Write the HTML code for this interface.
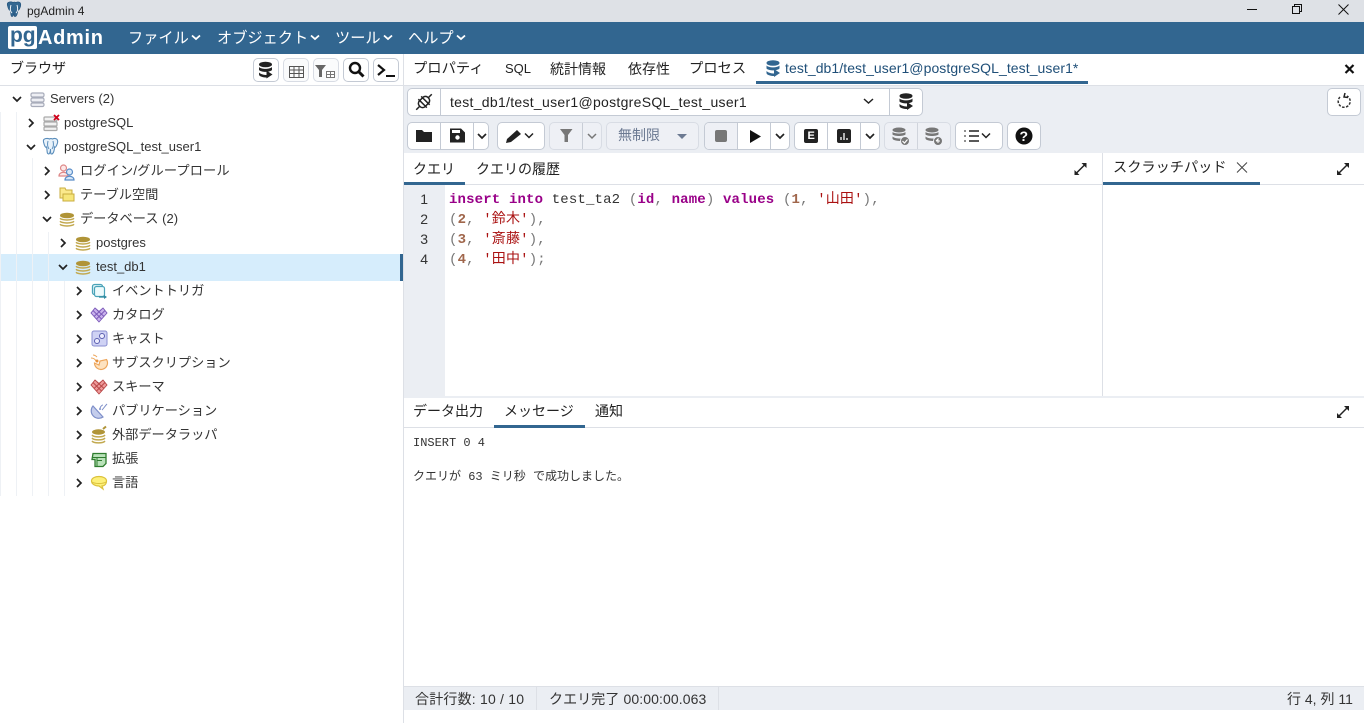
<!DOCTYPE html>
<html lang="ja"><head><meta charset="utf-8"><title>pgAdmin 4</title>
<style>
html,body{margin:0;padding:0;width:1364px;height:723px;overflow:hidden;background:#fff}
body{position:relative;font-family:"Liberation Sans","Noto Sans CJK JP",sans-serif;color:#222;font-size:13px}
.b{position:absolute}
.t{position:absolute;white-space:nowrap;line-height:20px;transform:translateY(-9px)}
.tr{font-size:13px;color:#333}
.cj{font-size:13.2px}
.tab{font-size:14px;color:#222}
.m{font-size:15.2px;color:#fff}
.btn{position:absolute;box-sizing:border-box;background:#fff;border:1px solid #c4cad4;border-radius:5px}
.dis{background:#eef0f5;border-color:#d8dce4}
.c{position:absolute;white-space:pre;font:14px/20px "Liberation Mono","Noto Sans CJK JP",monospace;letter-spacing:.16px;color:#333;left:449px}
.k{color:#908;font-weight:bold}.n{color:#a0664b;font-weight:bold}.s{color:#a11}.p{color:#777}
.ln{position:absolute;left:404px;width:24px;text-align:right;font:14px/20px "Liberation Sans",sans-serif;color:#333}
svg{position:absolute;left:0;top:0;overflow:visible;color:#222}
.o{position:absolute;white-space:pre;font:12px/16px "Liberation Mono","Noto Sans CJK JP",monospace;color:#333;left:413px}
.st{font-size:14px;color:#333}
</style></head><body>

<div class="b" style="left:0;top:0;width:1364px;height:22px;background:#dee1e6"></div>
<div class="b" style="left:0;top:22px;width:1364px;height:32px;background:#326690"></div>
<div class="b" style="left:403px;top:54px;width:1px;height:669px;background:#dde0e6"></div>
<div class="b" style="left:0;top:85px;width:1364px;height:1px;background:#dde0e6"></div>
<div class="b" style="left:404px;top:86px;width:960px;height:67px;background:#ebeef3"></div>
<div class="b" style="left:404px;top:184px;width:960px;height:1px;background:#dde0e6"></div>
<div class="b" style="left:404px;top:185px;width:41px;height:211px;background:#ebeef3"></div>
<div class="b" style="left:1102px;top:153px;width:1px;height:243px;background:#dde0e6"></div>
<div class="b" style="left:404px;top:396px;width:960px;height:2px;background:#ebeef3"></div>
<div class="b" style="left:404px;top:427px;width:960px;height:1px;background:#dde0e6"></div>
<div class="b" style="left:404px;top:686px;width:960px;height:24px;background:#ebeef3;border-top:1px solid #dde0e6;box-sizing:border-box"></div>
<div class="b" style="left:536px;top:687px;width:1px;height:23px;background:#dde0e6"></div>
<div class="b" style="left:718px;top:687px;width:1px;height:23px;background:#dde0e6"></div>

<div class="b" style="left:0;top:254px;width:400px;height:27px;background:#d6edfc"></div>
<div class="b" style="left:400px;top:254px;width:3px;height:27px;background:#326690"></div>
<div class="b" style="left:0;top:112px;width:1px;height:384px;background:#eef1f5"></div>
<div class="b" style="left:16px;top:112px;width:1px;height:384px;background:#eef1f5"></div>
<div class="b" style="left:32px;top:158px;width:1px;height:338px;background:#eef1f5"></div>
<div class="b" style="left:48px;top:232px;width:1px;height:264px;background:#eef1f5"></div>
<div class="b" style="left:64px;top:281px;width:1px;height:215px;background:#eef1f5"></div>

<div class="b" style="left:756px;top:81px;width:332px;height:3px;background:#326690"></div>
<div class="b" style="left:404px;top:182px;width:61px;height:3px;background:#326690"></div>
<div class="b" style="left:1103px;top:182px;width:157px;height:3px;background:#326690"></div>
<div class="b" style="left:494px;top:425px;width:91px;height:3px;background:#326690"></div>

<!-- toolbar buttons -->
<div class="btn" style="left:253px;top:58px;width:26px;height:24px"></div>
<div class="btn dis" style="left:283px;top:58px;width:26px;height:24px;background:#fafbfc"></div>
<div class="btn dis" style="left:313px;top:58px;width:26px;height:24px;background:#fafbfc"></div>
<div class="btn" style="left:343px;top:58px;width:26px;height:24px"></div>
<div class="btn" style="left:373px;top:58px;width:26px;height:24px"></div>

<div class="btn" style="left:407px;top:88px;width:516px;height:28px"></div>
<div class="b" style="left:440px;top:89px;width:1px;height:26px;background:#c4cad4"></div>
<div class="b" style="left:889px;top:89px;width:1px;height:26px;background:#c4cad4"></div>
<div class="btn" style="left:1327px;top:88px;width:34px;height:28px"></div>

<div class="btn" style="left:407px;top:122px;width:82px;height:28px"></div>
<div class="b" style="left:440px;top:123px;width:1px;height:26px;background:#c4cad4"></div>
<div class="b" style="left:473px;top:123px;width:1px;height:26px;background:#c4cad4"></div>
<div class="btn" style="left:497px;top:122px;width:48px;height:28px"></div>
<div class="btn dis" style="left:549px;top:122px;width:53px;height:28px"></div>
<div class="b" style="left:582px;top:123px;width:1px;height:26px;background:#c8cdd6"></div>
<div class="btn dis" style="left:606px;top:122px;width:93px;height:28px"></div>
<div class="btn" style="left:704px;top:122px;width:86px;height:28px"></div>
<div class="b" style="left:705px;top:123px;width:32px;height:26px;background:#eef0f5;border-radius:4px 0 0 4px;border-right:1px solid #c4cad4"></div>
<div class="b" style="left:770px;top:123px;width:1px;height:26px;background:#c4cad4"></div>
<div class="btn" style="left:794px;top:122px;width:86px;height:28px"></div>
<div class="b" style="left:827px;top:123px;width:1px;height:26px;background:#c4cad4"></div>
<div class="b" style="left:860px;top:123px;width:1px;height:26px;background:#c4cad4"></div>
<div class="btn dis" style="left:884px;top:122px;width:67px;height:28px"></div>
<div class="b" style="left:917px;top:123px;width:1px;height:26px;background:#d0d4dc"></div>
<div class="btn" style="left:955px;top:122px;width:48px;height:28px"></div>
<div class="btn" style="left:1007px;top:122px;width:34px;height:28px"></div>

<svg width="1364" height="723" viewBox="0 0 1364 723" fill="none">
<defs>
<g id="r"><path d="M-2-4 2 0-2 4" stroke="#222" stroke-width="1.700" fill="none"/></g>
<g id="d"><path d="M-4-2 0 2 4-2" stroke="#222" stroke-width="1.700" fill="none"/></g>
<g id="db"><path d="M-7 5.300C-5 7.500 5 7.500 7 5.300M-7 2.300C-5 4.500 5 4.500 7 2.300M-7-.7C-5 1.500 5 1.500 7-.7" stroke="#c2a94f" stroke-width="1.500" fill="none"/><ellipse cx="0" cy="-3.500" rx="7" ry="2.800" fill="#b09437"/></g>
<path id="elp" d="M-7-5C-8-9-3-9-1-8-.3-8.500 1-8.500 2-8 4-9 8-9 7-4 6-1 5 1 4 0 4 3 3 7 1 7 0 7 0 5 0 2 0 5-1 7-2 7-4 7-3 3-4 0-5 1-6-1-7-5Z"/>
<g id="exp"><path d="M-4 4 4-4" stroke="#222" stroke-width="1.500" fill="none"/><path d="M1-6H6V-1ZM-6 1V6H-1Z" fill="#222"/></g>
<g id="dbk" fill="currentColor"><ellipse cx="0" cy="-5" rx="6.500" ry="2.800"/><path d="M-6.500-2.500C-4 0 4 0 6.500-2.500V.5C4 3-4 3-6.500.5ZM-6.500 3C-4 5.500 1 5.500 1 5.500V8C-2 8-6.500 7-6.500 5Z"/><path d="M1 1 7 5 1 9Z"/></g>
<g id="hrt" stroke-width=".9"><path d="M-4-5 0-1.500 4-5 8 0 0 9-8 0Z" fill="currentColor"/><path d="M-6-2.500 2.500 6M-2-3 5 3.500M6-2.500-2.500 6M2-3-5 3.500" stroke-width=".9" fill="none"/></g>
</defs>

<!-- title bar -->
<use href="#elp" transform="translate(14 10) scale(.95)" fill="#336791" stroke="#1f4f78" stroke-width=".6"/>
<path d="M11 5C10 9 10 11 12 13M17 5C18 9 18 11 16 13" stroke="#fff" stroke-width=".9" />
<path d="M1247 9.500h10" stroke="#111" stroke-width="1"/>
<path d="M1292.500 6.500h7v7h-7zM1294.500 6.500v-2h7v7h-2" stroke="#111"/>
<path d="M1338.500 4.500l10 10M1348.500 4.500l-10 10" stroke="#111"/>

<!-- logo -->
<rect x="8" y="26" width="29" height="23" rx="2" fill="#fff"/>

<!-- menu chevrons -->
<g stroke="#fff" stroke-width="1.800"><path d="M192 35.500l4 3.500 4-3.500M311 35.500l4 3.500 4-3.500M384 35.500l4 3.500 4-3.500M457 35.500l4 3.500 4-3.500"/></g>

<!-- browser toolbar icons -->
<use href="#dbk" transform="translate(265.500 69.500)"/>
<g stroke="#555" fill="none"><rect x="289.500" y="66.500" width="14" height="11" /><path d="M289.500 70h14M289.500 73.500h14M294 66.500v11M299 66.500v11"/></g>
<path d="M315 65h11l-4 5v7h-3v-7z" fill="#666"/><g stroke="#777" fill="#fff"><rect x="326.500" y="71.500" width="8" height="6"/><path d="M326.500 74.500h8M330.500 71.500v6"/></g>
<circle cx="355" cy="68" r="5" stroke="#111" stroke-width="2.400"/><path d="M359 72l4.500 4.500" stroke="#111" stroke-width="3"/>
<path d="M378 65l6 5-6 5" stroke="#111" stroke-width="2.200"/><path d="M386 76h9" stroke="#111" stroke-width="2"/>

<!-- tree chevrons -->
<use href="#d" x="17" y="99"/><use href="#r" x="31" y="123"/><use href="#d" x="31" y="147"/>
<use href="#r" x="47" y="171"/><use href="#r" x="47" y="195"/><use href="#d" x="47" y="219"/>
<use href="#r" x="63" y="243"/><use href="#d" x="63" y="267"/>
<use href="#r" x="79" y="291"/><use href="#r" x="79" y="315"/><use href="#r" x="79" y="339"/><use href="#r" x="79" y="363"/><use href="#r" x="79" y="387"/><use href="#r" x="79" y="411"/><use href="#r" x="79" y="435"/><use href="#r" x="79" y="459"/><use href="#r" x="79" y="483"/>

<!-- tree icons -->
<g stroke="#a8acba" fill="#eeeff4" stroke-width="1.200"><rect x="31" y="93" width="13" height="4" rx="1.500"/><rect x="31" y="98" width="13" height="4" rx="1.500"/><rect x="31" y="103" width="13" height="3.500" rx="1.500"/></g>
<g stroke="#aaa" fill="#f2f2f2" stroke-width="1.200"><rect x="44" y="117" width="13" height="4" rx="1"/><rect x="44" y="122" width="13" height="4" rx="1"/><rect x="44" y="127" width="13" height="3.500" rx="1"/></g>
<path d="M54 115l5 5M59 115l-5 5" stroke="#d0021b" stroke-width="1.800"/>
<use href="#elp" transform="translate(50.500 147)" fill="#e8f2fa" stroke="#5a8dbb" stroke-width="1.100"/>
<path d="M48 141C47 145 47.500 147 49 149M53 141C54 145 53.500 147 52 149" stroke="#5a8dbb"/>
<circle cx="63.500" cy="168" r="3" stroke="#d88" fill="#fde8e8" stroke-width="1.200"/><path d="M59 176c0-5 9-5 9 0z" stroke="#d88" fill="#fde8e8" stroke-width="1.200"/>
<circle cx="69.500" cy="172" r="3" stroke="#5a8dc8" fill="#d8e8f8" stroke-width="1.200"/><path d="M65 180c0-5 9-5 9 0z" stroke="#5a8dc8" fill="#d8e8f8" stroke-width="1.200"/>
<path d="M60 188h5l1 2h6v8H60z" fill="#fbe98c" stroke="#c9ad3f"/><rect x="63" y="194" width="11" height="7" fill="#f7e67a" stroke="#c9ad3f"/>
<use href="#db" transform="translate(67 219)"/>
<use href="#db" transform="translate(83 243)"/>
<use href="#db" transform="translate(83 267)"/>
<rect x="92.500" y="284.500" width="10" height="10" rx="2" fill="#e6f6fa" stroke="#4aa3b8" stroke-width="1.300"/><rect x="94.500" y="286.500" width="10" height="10" rx="2" fill="#edfafc" stroke="#4aa3b8" stroke-width="1.200"/><path d="M99 297h6" stroke="#2e8aa0" stroke-width="1.300"/><path d="M104 295l3 2-3 2z" fill="#2e8aa0"/>
<g color="#c9b2ec" stroke="#7a58b8"><use href="#hrt" transform="translate(99 313)"/></g>
<rect x="92" y="331" width="15" height="15" rx="2" fill="#cfd2f4" stroke="#8a8ed0"/><circle cx="97" cy="341" r="2.500" stroke="#5a5eb0" fill="#eef"/><circle cx="102" cy="336" r="2.500" stroke="#5a5eb0" fill="#eef"/>
<path d="M94.500 363L99 365 100 361 106.500 359.500A6.500 6.500 0 1 1 94.500 363Z" fill="#fde2c0" stroke="#eda65c" stroke-width="1.200"/><path d="M91 358c2 0 4 1 5 3M93 355c2 0 3 1 4 2" stroke="#eda65c"/><circle cx="97" cy="361" r="1.500" fill="#e8923c"/>
<g color="#ee9a9a" stroke="#b84646"><use href="#hrt" transform="translate(99 385)"/></g>
<path d="M93 406L103 417A7.500 7.500 0 0 1 93 406Z" fill="#c4cdec" stroke="#7d8ec8" stroke-width="1.200"/><path d="M100 408c1-2 2-3 3-3M102 410c2-2 3-4 5-6" stroke="#7d8ec8"/><circle cx="100" cy="409" r="1" fill="#7d8ec8"/>
<ellipse cx="98.500" cy="432" rx="6.500" ry="2.700" fill="#b09437"/><path d="M92 435c2 2.500 11 2.500 13 0M92 438c2 2.500 11 2.500 13 0M92 441c2 2.500 11 2.500 13 0" stroke="#c2a94f" stroke-width="1.500"/><path d="M103 429l3-2.500" stroke="#b09437" stroke-width="2"/>
<path d="M93 453.500h13v10l-3 3h-8v-7h-3z" fill="#b9e2b9" stroke="#2f7d2f" stroke-width="1.300"/><path d="M92 457.500h14M97 460.500h5M97 457.500v9" stroke="#2f7d2f"/>
<path d="M91.500 481c0-6 15-6 15 0 0 3-2 5-4.500 5l1 3-4-3c-4 0-7.500-2-7.500-5z" fill="#fdf07a" stroke="#dcc23c" stroke-width="1.200"/><path d="M92 482c3 2 11 2 14 0" stroke="#dcc23c"/>

<!-- tab icon / close -->
<use href="#dbk" transform="translate(773 68)" style="color:#326690"/>
<path d="M1345.500 65l8 8M1353.500 65l-8 8" stroke="#111" stroke-width="2.200"/>

<!-- connection bar -->
<g transform="rotate(-45 424 102)" stroke="#222" stroke-width="1.500"><rect x="418" y="98" width="12" height="8" rx="3.500" fill="#fff"/><path d="M413 102h5M430 102h5M422 96v12M426 96v12"/></g>
<path d="M864 99l4.500 4 4.500-4" stroke="#222" stroke-width="1.500"/>
<use href="#dbk" transform="translate(906 101)"/>
<path d="M1340 97a6 6 0 1 0 7-1" stroke="#333" stroke-width="1.500" stroke-dasharray="2.500 1.500"/><path d="M1345 93l-1 4 4 .5" stroke="#222" stroke-width="1.500"/>

<!-- toolbar icons -->
<path d="M416 130h6l2 2h8v10h-16z" fill="#222"/>
<path d="M450 128.500h11l4 4v10h-15z" fill="#222"/><circle cx="457.500" cy="137.500" r="2.200" fill="#fff"/><rect x="452" y="130" width="8" height="3" fill="#fff"/>
<use href="#d" x="482" y="136"/>
<path d="M506 143l1-4 10-9 4 4-10 8z" fill="#222"/><path d="M525 133.500l4 4 4-4" stroke="#222" stroke-width="1.500"/>
<path d="M560 129h12.500l-4.500 6v7h-3.500v-7z" fill="#777"/>
<path d="M588 134l4 4 4-4" stroke="#777" stroke-width="1.500"/>
<path d="M677 134h10l-5 5z" fill="#6c7a92"/>
<rect x="715" y="130" width="12" height="12" rx="2" fill="#777"/>
<path d="M750 130l11 6.500-11 6.500z" fill="#111"/>
<use href="#d" x="780" y="136"/>
<rect x="804" y="129" width="14" height="14" rx="2" fill="#222"/>
<rect x="837" y="129" width="14" height="14" rx="2" fill="#222"/><path d="M841 140v-3M844 140v-7M847 140v-2" stroke="#fff" stroke-width="1.300"/>
<use href="#d" x="870" y="136"/>
<g fill="#777"><ellipse cx="899" cy="130" rx="6.500" ry="2.500"/><path d="M892.500 132c2 2 11 2 13 0v2.500c-2 2-11 2-13 0zM892.500 136.500c2 2 6 2 8 2v2.500c-2 0-8-.5-8-2.500z"/></g><circle cx="905" cy="141" r="4.500" fill="#777" stroke="#eef0f5"/><path d="M902.500 141l2 2 3-3.500" stroke="#fff" stroke-width="1.200"/>
<g fill="#777"><ellipse cx="932" cy="130" rx="6.500" ry="2.500"/><path d="M925.500 132c2 2 11 2 13 0v2.500c-2 2-11 2-13 0zM925.500 136.500c2 2 6 2 8 2v2.500c-2 0-8-.5-8-2.500z"/></g><circle cx="938" cy="141" r="4.500" fill="#777" stroke="#eef0f5"/><path d="M936 141l2-2v4M936 141h4" stroke="#fff" stroke-width="1"/>
<path d="M969 131h10M969 136h10M969 141h10" stroke="#222" stroke-width="1.400"/><path d="M965 130v2M965 135v2M965 140v2" stroke="#222"/><path d="M982 133.500l4 4 4-4" stroke="#222" stroke-width="1.500"/>
<circle cx="1024" cy="136" r="8.500" fill="#111"/>

<use href="#exp" x="1080.500" y="169"/>
<use href="#exp" x="1343" y="169"/>
<use href="#exp" x="1343" y="412"/>
<path d="M1237 162.500l10 10M1247 162.500l-10 10" stroke="#444" stroke-width="1"/>
</svg>

<!-- text -->
<span class="t" style="left:27px;top:10px;font-size:12px;color:#222">pgAdmin 4</span>
<span class="t" style="left:10px;top:35px;font-size:21px;font-weight:bold;color:#326690;letter-spacing:-.1px">pg</span>
<span class="t" style="left:38px;top:37px;font-size:20px;font-weight:bold;color:#fff;letter-spacing:.7px">Admin</span>
<span class="t m" style="left:128px;top:37.500px">ファイル</span>
<span class="t m" style="left:217px;top:37.500px">オブジェクト</span>
<span class="t m" style="left:335px;top:37.500px">ツール</span>
<span class="t m" style="left:408px;top:37.500px">ヘルプ</span>
<span class="t" style="left:10px;top:67px;font-size:14px;color:#222">ブラウザ</span>

<span class="t tr" style="left:50px;top:98px">Servers (2)</span>
<span class="t tr" style="left:64px;top:122px">postgreSQL</span>
<span class="t tr" style="left:64px;top:146px">postgreSQL_test_user1</span>
<span class="t tr cj" style="left:80px;top:170px;letter-spacing:.15px">ログイン/グループロール</span>
<span class="t tr cj" style="left:80px;top:194px">テーブル空間</span>
<span class="t tr cj" style="left:80px;top:218px">データベース <span style="font-size:13px">(2)</span></span>
<span class="t tr" style="left:96px;top:242px">postgres</span>
<span class="t tr" style="left:96px;top:266px">test_db1</span>
<span class="t tr cj" style="left:112px;top:290px">イベントトリガ</span>
<span class="t tr cj" style="left:112px;top:314px">カタログ</span>
<span class="t tr cj" style="left:112px;top:338px">キャスト</span>
<span class="t tr cj" style="left:112px;top:362px">サブスクリプション</span>
<span class="t tr cj" style="left:112px;top:386px">スキーマ</span>
<span class="t tr cj" style="left:112px;top:410px">パブリケーション</span>
<span class="t tr cj" style="left:112px;top:434px">外部データラッパ</span>
<span class="t tr cj" style="left:112px;top:458px">拡張</span>
<span class="t tr cj" style="left:112px;top:482px">言語</span>

<span class="t tab" style="left:413px;top:68px;font-size:14.300px">プロパティ</span>
<span class="t tab" style="left:505px;top:68px;font-size:13px">SQL</span>
<span class="t tab" style="left:550px;top:68px">統計情報</span>
<span class="t tab" style="left:628px;top:68px">依存性</span>
<span class="t tab" style="left:689px;top:68px;font-size:14.300px">プロセス</span>
<span class="t tab" style="left:785px;top:67px;color:#1f4f78;letter-spacing:.07px">test_db1/test_user1@postgreSQL_test_user1*</span>
<span class="t" style="left:450px;top:101px;font-size:14px;color:#222;letter-spacing:.29px">test_db1/test_user1@postgreSQL_test_user1</span>
<span class="t" style="left:618px;top:134px;font-size:14px;color:#6c7a92">無制限</span>
<span class="t" style="left:807.500px;top:135px;font-size:11px;font-weight:bold;color:#fff">E</span>
<span class="t" style="left:1019.500px;top:135px;font-size:14px;font-weight:bold;color:#fff">?</span>

<span class="t tab" style="left:413px;top:168px">クエリ</span>
<span class="t tab" style="left:476px;top:168px">クエリの履歴</span>
<span class="t tab" style="left:1113px;top:167px;font-size:14.200px">スクラッチパッド</span>

<div class="ln" style="top:189px">1</div>
<div class="ln" style="top:209px">2</div>
<div class="ln" style="top:229px">3</div>
<div class="ln" style="top:249px">4</div>
<div class="c" style="top:190px"><span class="k">insert</span> <span class="k">into</span> test_ta2 <span class="p">(</span><span class="k">id</span><span class="p">,</span> <span class="k">name</span><span class="p">)</span> <span class="k">values</span> <span class="p">(</span><span class="n">1</span><span class="p">,</span> <span class="s">'山田'</span><span class="p">),</span></div>
<div class="c" style="top:210px"><span class="p">(</span><span class="n">2</span><span class="p">,</span> <span class="s">'鈴木'</span><span class="p">),</span></div>
<div class="c" style="top:230px"><span class="p">(</span><span class="n">3</span><span class="p">,</span> <span class="s">'斎藤'</span><span class="p">),</span></div>
<div class="c" style="top:250px"><span class="p">(</span><span class="n">4</span><span class="p">,</span> <span class="s">'田中'</span><span class="p">);</span></div>

<span class="t tab" style="left:413px;top:410px">データ出力</span>
<span class="t tab" style="left:504px;top:410px">メッセージ</span>
<span class="t tab" style="left:595px;top:410px">通知</span>
<div class="o" style="top:435px">INSERT 0 4</div>
<div class="o" style="top:469px">クエリが 63 ミリ秒 で成功しました。</div>

<span class="t st" style="left:415px;top:698px;letter-spacing:.2px">合計行数: 10 / 10</span>
<span class="t st" style="left:549px;top:698px;letter-spacing:.1px">クエリ完了 00:00:00.063</span>
<span class="t st" style="left:1287px;top:698px">行 4, 列 11</span>
</body></html>
